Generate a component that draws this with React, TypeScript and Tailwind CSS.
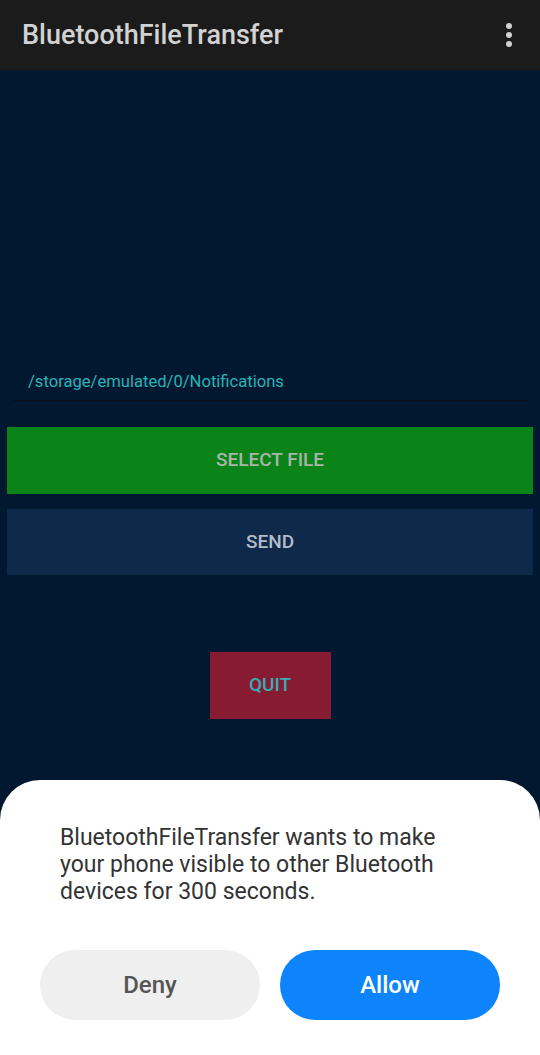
import React from 'react';

export default function App() {
  return (
    <div className="relative w-[540px] h-[1055px] overflow-hidden bg-[#011830] font-['Roboto',sans-serif]">
      {/* Toolbar */}
      <div className="h-[70px] bg-[#1b1b1b] flex items-center justify-between pl-[22px] pr-[28px]">
        <h1 className="text-[27px] font-medium text-[#d2d2d2]">BluetoothFileTransfer</h1>
        <div className="flex flex-col gap-[3px] items-center">
          <span className="w-[6px] h-[6px] rounded-full bg-[#d2d2d2]" />
          <span className="w-[6px] h-[6px] rounded-full bg-[#d2d2d2]" />
          <span className="w-[6px] h-[6px] rounded-full bg-[#d2d2d2]" />
        </div>
      </div>

      {/* Content */}
      <div className="flex flex-col items-center pt-[300px]">
        <div className="w-[516px] border-b border-[#0b0f18] pl-[16px] pb-[6px]">
          <p className="text-[16.6px] text-[#28b3b8] leading-[24px]">/storage/emulated/0/Notifications</p>
        </div>
        <button className="mt-[26px] w-[526px] h-[67px] bg-[#0a8318] text-[#a8b6a8] text-[19px] font-medium uppercase">
          Select File
        </button>
        <button className="mt-[15px] w-[526px] h-[66px] bg-[#0e294a] text-[#b4bccb] text-[19px] font-medium uppercase">
          Send
        </button>
        <button className="mt-[77px] w-[121px] h-[67px] bg-[#861b32] text-[#3aabb3] text-[19px] font-medium uppercase">
          Quit
        </button>
      </div>

      {/* Bottom sheet */}
      <div className="absolute left-0 right-0 top-[780px] bottom-0 bg-white rounded-t-[40px] px-[40px] pt-[44px]">
        <p className="pl-[20px] pr-[40px] text-[23px] leading-[27px] text-[#333333]">
          BluetoothFileTransfer wants to make your phone visible to other Bluetooth devices for 300 seconds.
        </p>
        <div className="mt-[45px] flex gap-[20px]">
          <button className="w-[220px] h-[70px] rounded-full bg-[#efefef] text-[#555555] text-[24px] font-medium">
            Deny
          </button>
          <button className="w-[220px] h-[70px] rounded-full bg-[#0d84fb] text-white text-[24px] font-medium">
            Allow
          </button>
        </div>
      </div>
    </div>
  );
}
